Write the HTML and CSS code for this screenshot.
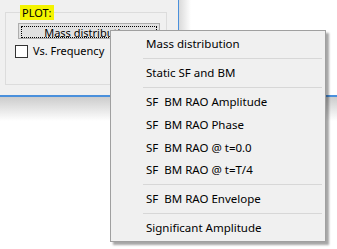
FILE: index.html
```html
<!DOCTYPE html>
<html lang="en">
  <head>
    <meta charset="UTF-8">
    <title>Plot menu</title>
    <link rel="stylesheet" href="styles.css">
  </head>
  <body>
    <div class="screen">
      <div class="top">
        <div class="form">
          <fieldset class="group">
            <legend class="group-title"><span class="highlight">PLOT:</span></legend>
            <button class="btn" type="button"><span class="focus">Mass distribution</span></button>
            <label class="check"><span class="box"></span>Vs. Frequency</label>
          </fieldset>
        </div>
        <div class="panel-right"></div>
      </div>
      <div class="panel-bottom"></div>

      <ul class="menu">
        <li class="item">Mass distribution</li>
        <li class="sep"></li>
        <li class="item">Static SF and BM</li>
        <li class="sep"></li>
        <li class="item">SF&nbsp; BM RAO Amplitude</li>
        <li class="item tall">SF&nbsp; BM RAO Phase</li>
        <li class="item tall">SF&nbsp; BM RAO @ t=0.0</li>
        <li class="item">SF&nbsp; BM RAO @ t=T/4</li>
        <li class="sep"></li>
        <li class="item">SF&nbsp; BM RAO Envelope</li>
        <li class="sep"></li>
        <li class="item">Significant Amplitude</li>
      </ul>
    </div>
  </body>
</html>
```

FILE: styles.css
```css
body {
  margin: 0;
  padding: 0;
  font-family: "Noto Sans", Arial, sans-serif;
  font-size: 11.5px;
  color: #000;
  background-color: #f0f0f0;
}

.screen {
  position: relative;
  width: 337px;
  height: 249px;
  overflow: hidden;
  display: flex;
  flex-direction: column;
}

.top {
  display: flex;
  height: 95px;
}

.form {
  width: 178px;
  padding: 5px 0 0 5px;
  box-sizing: border-box;
  font-size: 11px;
}

.group {
  margin: 0;
  width: 162px;
  height: 80px;
  box-sizing: border-box;
  border: 1px solid #dcdcdc;
  padding: 0 0 0 9px;
}

.group-title {
  padding: 0;
  margin-left: 5px;
  line-height: 15px;
}

.highlight {
  display: inline-block;
  background-color: #f4f400;
  padding: 0 2px;
}

.btn {
  display: block;
  width: 142px;
  height: 16px;
  margin: 3px 0 0 3px;
  padding: 2px;
  border: 1px solid #adadad;
  background-color: #e1e1e1;
  font-family: inherit;
  font-size: 11px;
  line-height: 12px;
  box-sizing: border-box;
  overflow: visible;
}

.focus {
  display: block;
  height: 10px;
  border: 1px dotted #000;
  line-height: 12px;
  text-align: center;
}

.check {
  display: flex;
  align-items: center;
  gap: 5px;
  margin-top: 5px;
  line-height: 14px;
}

.box {
  width: 11px;
  height: 11px;
  border: 1px solid #333;
  background-color: #fff;
}

.panel-right {
  flex: 1;
  border-left: 1px solid #4a90dc;
  background: linear-gradient(to right, #dadada, #ffffff 12px);
}

.panel-bottom {
  flex: 1;
  border-top: 2px solid #4a90dc;
  background: linear-gradient(to bottom, #cccccc, #ffffff 24px);
}

.menu {
  position: absolute;
  left: 110px;
  top: 30px;
  width: 216px;
  height: 212px;
  box-sizing: border-box;
  margin: 0;
  padding: 2px 2px 3px;
  list-style: none;
  background-color: #f0f0f0;
  border: 1px solid #a0a0a0;
  box-shadow: 3px 3px 2px rgba(0, 0, 0, 0.35);
}

.item {
  height: 22px;
  line-height: 22px;
  padding-left: 33px;
  white-space: nowrap;
}

.tall {
  height: 23px;
  line-height: 23px;
}

.sep {
  height: 1px;
  margin: 3px 1px 3px 30px;
  background-color: #d7d7d7;
}
```
